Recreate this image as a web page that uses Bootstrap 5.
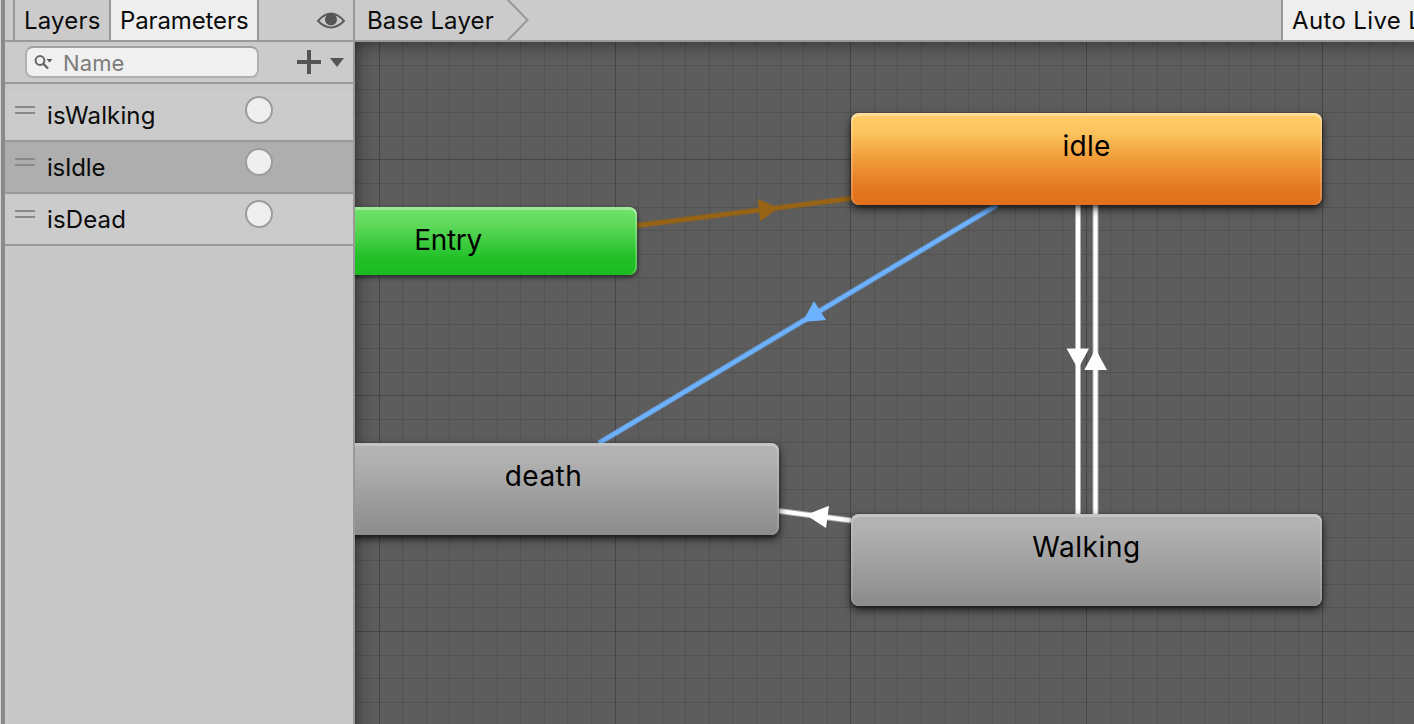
<!DOCTYPE html>
<html lang="en">
<head>
<meta charset="utf-8">
<title>Animator</title>
<link rel="stylesheet" href="https://cdn.jsdelivr.net/npm/bootstrap@5.3.0/dist/css/bootstrap.min.css">
<style>
  body { font-family: Inter, "Liberation Sans", sans-serif; font-size: 24px; line-height: 30px; color: #0b0b0b; background: #c8c8c8; white-space: nowrap; }
  .dock-edge { width: 5px; background: #8a8a8a; border-left: 1px solid #d4d4d4; }
  .side { width: 350px; border-right: 2px solid #999; background: #c8c8c8; }
  .bar { height: 42px; background: #cbcbcb; border-bottom: 2px solid #999; }
  .tab-item { border-left: 2px solid #999; height: 40px; padding-top: 6px; letter-spacing: .2px; }
  .tab-layers { width: 96px; margin-left: 8px; padding-left: 9px; }
  .tab-params { width: 150px; padding-left: 9px; border-right: 2px solid #999; background: #eee; letter-spacing: -.12px; }
  .search { width: 234px; height: 32px; margin-left: 20px; border: 2px solid #b0b0b0; border-top-color: #a0a0a0; border-radius: 8px; background: #f0f0f0; color: #7d7d7d; }
  .search-text { margin-left: 9px; font-size: 22px; letter-spacing: .1px; padding-top: 1px; }
  .param { height: 52px; border-bottom: 2px solid #999; background: #cbcbcb; }
  .param.selected { background: #aeaeae; }
  .grip { width: 20px; height: 8px; margin: 16px 0 0 10px; border: solid #888; border-width: 2px 0; }
  .param-name { width: 198px; margin: 11px 0 0 12px; letter-spacing: .14px; }
  .selected .param-name { letter-spacing: -.2px; }
  .trigger { width: 28px; height: 28px; margin-top: 6px; border: 2px solid #9c9c9c; border-radius: 50%; background: #efefef; }
  .crumb { padding: 6px 0 0 12px; letter-spacing: .16px; }
  .live { width: 133px; padding-left: 9px; background: #eee; letter-spacing: .36px; }
  .canvas { background: #5d5d5d; }
  .canvas-shade { inset: 0; background: linear-gradient(90deg, rgba(0,0,0,.27), rgba(0,0,0,.08) 9px, transparent 20px), linear-gradient(rgba(0,0,0,.27), rgba(0,0,0,.08) 9px, transparent 20px); }
  .graph { left: 0; top: 0; }
  .state { position: absolute; border-radius: 8px; font-size: 28px; line-height: 34px; text-align: center; color: #000; letter-spacing: .5px; }
  .state.tall { width: 471px; height: 92px; padding-top: 16px; background: linear-gradient(#b4b4b4 4px, #afafaf 20px, #8d8d8d 88px); box-shadow: 0 4px 10px rgba(0,0,0,.65), 0 2px 3px rgba(0,0,0,.3), inset 0 3px 0 rgba(255,255,255,.22), inset 2px 0 0 rgba(255,255,255,.12), inset -2px 0 0 rgba(255,255,255,.12); }
  .state.idle { left: 496px; top: 71px; letter-spacing: .2px; background: linear-gradient(#ffcb66 4px, #fcc35d 20px, #f09a38 47px, #e47821 75px, #e2701c 90px); box-shadow: 0 4px 10px rgba(0,0,0,.65), 0 2px 3px rgba(0,0,0,.3), inset 0 3px 0 rgba(255,255,255,.33), inset 2px 0 0 rgba(255,255,255,.18), inset -2px 0 0 rgba(255,255,255,.18); }
  .state.walking { left: 496px; top: 472px; letter-spacing: .6px; }
  .state.death { left: -47px; top: 401px; }
  .state.entry { left: -96px; top: 165px; width: 378px; height: 68px; padding-top: 16px; letter-spacing: -.3px; background: linear-gradient(#6ce067 4px, #62da5d 16px, #23c129 50px, #1dbb22 66px); box-shadow: 0 2px 5px rgba(0,0,0,.6), inset 0 3px 0 rgba(255,255,255,.33), inset -2px 0 0 rgba(255,255,255,.22); }
</style>
</head>
<body class="d-flex vh-100 overflow-hidden">
  <div class="dock-edge flex-shrink-0"></div>

  <aside class="side flex-shrink-0">
    <div class="bar d-flex">
      <div class="tab-item tab-layers">Layers</div>
      <div class="tab-item tab-params">Parameters</div>
      <svg class="ms-auto" width="30" height="40" viewBox="0 0 30 40" style="margin-right:7px">
        <path d="M2 21Q15 6 28 21Q15 34 2 21Z" fill="none" stroke="#5c5c5c" stroke-width="2" stroke-linejoin="round"/>
        <circle cx="15" cy="19.5" r="6" fill="#555"/>
      </svg>
    </div>
    <div class="bar d-flex align-items-center">
      <div class="search d-flex align-items-center">
        <svg width="20" height="20" viewBox="0 0 20 20" style="margin-left:7px">
          <circle cx="6" cy="8.5" r="4.4" fill="none" stroke="#666" stroke-width="2"/>
          <path d="M9 11.5l5 5" stroke="#666" stroke-width="2.4"/>
          <path d="M12.5 7h6l-3 3.5z" fill="#555"/>
        </svg>
        <span class="search-text">Name</span>
      </div>
      <svg class="ms-auto" width="50" height="40" viewBox="0 0 50 40" style="margin-right:8px">
        <path d="M2 20H26M14 8V32" stroke="#555" stroke-width="4"/>
        <path d="M35 16H49L42 25Z" fill="#555"/>
      </svg>
    </div>
    <div style="height:6px"></div>
    <div class="param d-flex"><span class="grip"></span><span class="param-name">isWalking</span><span class="trigger"></span></div>
    <div class="param selected d-flex"><span class="grip"></span><span class="param-name">isIdle</span><span class="trigger"></span></div>
    <div class="param d-flex"><span class="grip"></span><span class="param-name">isDead</span><span class="trigger"></span></div>
  </aside>

  <main class="d-flex flex-column flex-grow-1 overflow-hidden">
    <div class="bar d-flex flex-shrink-0">
      <div class="crumb">Base Layer</div>
      <svg width="26" height="40" viewBox="0 0 26 40" style="margin-left:11px">
        <path d="M2 -1L22.5 20L2 41" fill="none" stroke="#999" stroke-width="2"/>
      </svg>
      <div class="tab-item live ms-auto overflow-hidden">Auto Live L</div>
    </div>
    <div class="canvas flex-grow-1 position-relative overflow-hidden">
      <svg class="graph position-absolute" width="1059" height="682" viewBox="355 42 1059 682">
        <path id="minor" stroke="#525252" fill="none"/>
        <path id="major" stroke="#464646" fill="none"/>
        <g fill="none" stroke-opacity=".5" stroke-width="6">
          <path d="M637 225.5L851 198.5" stroke="#966414"/>
          <path d="M997 205L599 443" stroke="#6db2ff"/>
          <path d="M1078 205V514M1095.5 205V514M779 511L851 520.5" stroke="#fff"/>
        </g>
        <g fill="none" stroke-width="4">
          <path d="M637 225.5L851 198.5" stroke="#966414"/>
          <path d="M997 205L599 443" stroke="#6db2ff"/>
          <path d="M1078 205V514M1095.5 205V514M779 511L851 520.5" stroke="#fff"/>
        </g>
        <path d="M757.7 199L778.5 208L760.3 221.3Z" fill="#966414"/>
        <path d="M814 301L826 320L802.5 322Z" fill="#6db2ff"/>
        <path d="M1066.5 348.5H1089L1078 369ZM1084.3 370H1107L1095.5 349ZM806 515L829 505.7L826 528Z" fill="#fff"/>
      </svg>
      <div class="canvas-shade position-absolute"></div>
      <div class="state entry">Entry</div>
      <div class="state tall idle">idle</div>
      <div class="state tall death">death</div>
      <div class="state tall walking">Walking</div>
    </div>
  </main>

<script src="https://cdn.jsdelivr.net/npm/bootstrap@5.3.0/dist/js/bootstrap.bundle.min.js"></script>
<script>
  // Grid: one major line for every ten minor ones, snapped to whole pixels
  const step = 23.578, paths = { minor: "", major: "" };
  for (let i = -1; i < 45; i++) {
    const x = Math.floor(379.22 + i * step) + .5;
    paths[i % 10 ? "minor" : "major"] += `M${x} 42V724`;
  }
  for (let i = -4; i < 24; i++) {
    const y = Math.floor(159.9 + i * step) + .5;
    paths[i % 10 ? "minor" : "major"] += `M355 ${y}H1414`;
  }
  for (const id in paths) document.getElementById(id).setAttribute("d", paths[id]);
</script>
</body>
</html>
